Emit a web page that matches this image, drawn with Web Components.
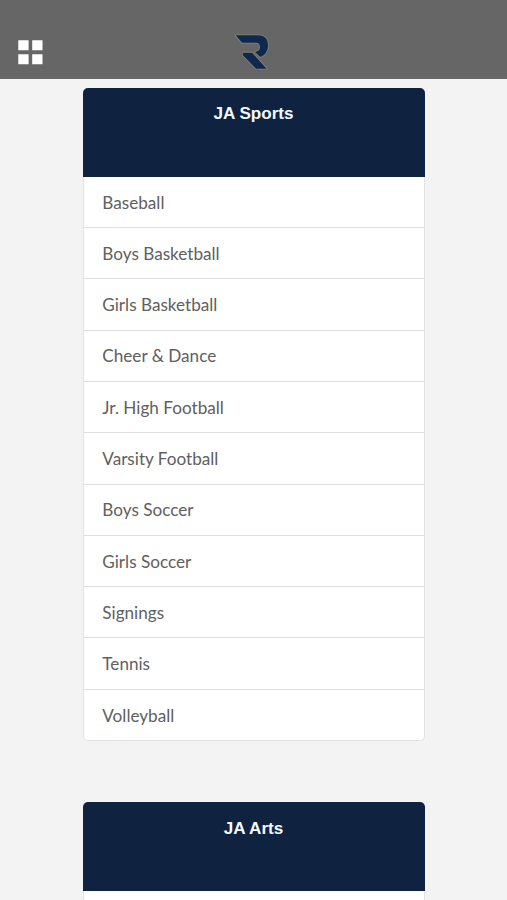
<!DOCTYPE html>
<html lang="en">
<head>
<meta charset="utf-8">
<title>Sports and Arts</title>
<style>
html,body{margin:0;height:900px;overflow:hidden;background:#f3f3f3}
</style>
</head>
<body>
<app-shell>
  <top-bar slot="bar"></top-bar>
  <link-card heading="JA Sports">
    <link-row>Baseball</link-row>
    <link-row>Boys Basketball</link-row>
    <link-row>Girls Basketball</link-row>
    <link-row>Cheer &amp; Dance</link-row>
    <link-row>Jr. High Football</link-row>
    <link-row>Varsity Football</link-row>
    <link-row>Boys Soccer</link-row>
    <link-row>Girls Soccer</link-row>
    <link-row>Signings</link-row>
    <link-row>Tennis</link-row>
    <link-row>Volleyball</link-row>
  </link-card>
  <link-card heading="JA Arts">
    <link-row></link-row>
  </link-card>
</app-shell>
<script>
const define = (name, html, setup) => customElements.define(name, class extends HTMLElement {
  connectedCallback() {
    if (this.shadowRoot) return;
    this.attachShadow({mode: 'open'}).innerHTML = html;
    if (setup) setup(this);
  }
});

define('app-shell', `
<style>
:host{display:block;height:900px;overflow:hidden;background:#f3f3f3}
main{display:flex;flex-direction:column;align-items:center;gap:61.2px;padding-top:8.6px}
</style>
<slot name="bar"></slot><main><slot></slot></main>`);

define('top-bar', `
<style>
:host{display:grid;grid-template-columns:1fr auto 1fr;box-sizing:border-box;height:79px;padding:25px 18px 0;background:#666}
.menu{display:block;margin-top:15px}
.logo{display:block;margin-left:-3px}
</style>
<svg class="menu" width="25" height="25" viewBox="0 0 25 25" fill="#fff"><path d="M.3.3h10.3v10H.3zM14.2.3h10.3v10H14.2zM.3 14.2h10.3v10H.3zM14.2 14.2h10.3v10H14.2z"/></svg>
<svg class="logo" width="55" height="54" viewBox="0 0 165 162"><g fill="#10284f" stroke="#85846c" stroke-width="5" paint-order="stroke" stroke-linejoin="round"><path d="M32 31H100C120 31 129 44 129 61C129 78 120 92 106 96L89 80H93C101 79 105 74 105 67C105 58 101 53 93 53H51Z"/><path d="M53 83H81L125 131H93L53 90Z"/></g></svg>
<span></span>`);

define('link-card', `
<style>
:host{display:block;flex:none;width:342px}
header{box-sizing:border-box;height:89.2px;padding-top:15.7px;border-radius:5px 5px 0 0;background:#0f2340;text-align:center}
h2{margin:0;font:bold 17.1px/22px "Liberation Sans",Arial,sans-serif;color:#f4f9ff}
.rows{box-sizing:border-box;height:564px;border:1px solid #e3e3e3;border-top:0;border-radius:0 0 5px 5px;background:#fff;overflow:hidden}
::slotted(:not(:last-child)){border-bottom:1.1px solid #e0e0e0}
</style>
<header><h2></h2></header><div class="rows"><slot></slot></div>`,
el => el.shadowRoot.querySelector('h2').textContent = el.getAttribute('heading'));

define('link-row', `
<style>
:host{display:flex;align-items:center;box-sizing:border-box;height:51.3px;padding:1.2px 18.5px 0 18.8px;font:17.15px/24px Lato,sans-serif;color:#606060}
</style>
<slot></slot>`);
</script>
</body>
</html>
